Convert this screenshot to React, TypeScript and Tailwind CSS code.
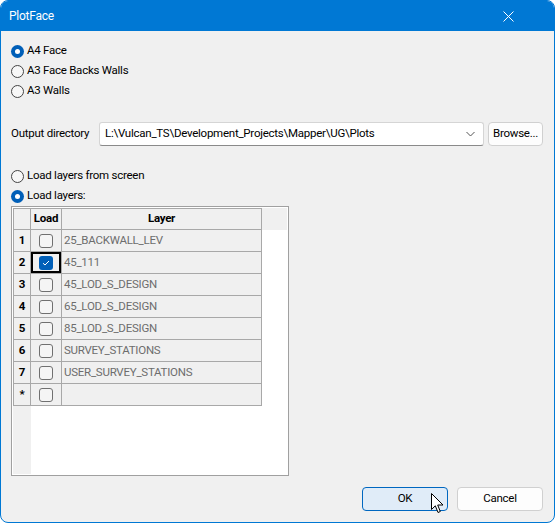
import React from 'react';

const layers = [
  { n: '1', name: '25_BACKWALL_LEV', checked: false },
  { n: '2', name: '45_111', checked: true },
  { n: '3', name: '45_LOD_S_DESIGN', checked: false },
  { n: '4', name: '65_LOD_S_DESIGN', checked: false },
  { n: '5', name: '85_LOD_S_DESIGN', checked: false },
  { n: '6', name: 'SURVEY_STATIONS', checked: false },
  { n: '7', name: 'USER_SURVEY_STATIONS', checked: false },
  { n: '*', name: '', checked: false },
];

function Radio({ checked, label }: { checked?: boolean; label: string }) {
  return (
    <div className="flex items-center h-[20px]">
      {checked ? (
        <span className="w-[13px] h-[13px] rounded-full bg-[#005fb8] flex items-center justify-center">
          <span className="w-[5px] h-[5px] rounded-full bg-white" />
        </span>
      ) : (
        <span className="w-[13px] h-[13px] rounded-full border border-[#444] bg-[#f7f7f7]" />
      )}
      <span className="ml-[3px] whitespace-nowrap">{label}</span>
    </div>
  );
}

function Checkbox({ checked }: { checked?: boolean }) {
  if (checked) {
    return (
      <span className="w-[14px] h-[14px] rounded-[3px] bg-[#005fb8] flex items-center justify-center">
        <svg width="8" height="6" viewBox="0 0 8 6" fill="none">
          <path d="M1 3.2 L3 5 L7 1" stroke="white" strokeWidth="1" />
        </svg>
      </span>
    );
  }
  return <span className="w-[14px] h-[14px] rounded-[3px] border border-[#707070] bg-[#f5f5f5]" />;
}

function LayerGrid() {
  return (
    <div className="flex flex-col w-[278px] h-[270px] border border-[#a0a0a0] bg-white p-px">
      <div className="flex h-[22px] bg-[#f0f0f0]">
        <div className="w-[18px] border border-[#a8a8a8]" />
        <div className="w-[31px] border-y border-r border-[#a8a8a8] flex items-center justify-center font-bold text-black">
          Load
        </div>
        <div className="w-[200px] border-y border-r border-[#a8a8a8] flex items-center justify-center font-bold text-black">
          Layer
        </div>
      </div>
      {layers.map((l) => (
        <div key={l.n} className="flex h-[22px]">
          <div className="w-[18px] bg-[#f0f0f0] border-x border-b border-[#a8a8a8] flex items-center justify-center font-bold text-black">
            {l.n}
          </div>
          <div
            className={
              l.checked
                ? 'w-[31px] bg-[#f0f0f0] border-r border-b border-[#a8a8a8] flex items-center justify-center shadow-[inset_0_0_0_2px_#000]'
                : 'w-[31px] bg-[#f0f0f0] border-r border-b border-[#a8a8a8] flex items-center justify-center'
            }
          >
            <Checkbox checked={l.checked} />
          </div>
          <div className="w-[200px] bg-[#f0f0f0] border-r border-b border-[#a8a8a8] flex items-center pl-[2px] text-[#6d6d6d]">
            {l.name}
          </div>
        </div>
      ))}
      <div className="flex-1 flex">
        <div className="w-[18px] bg-[#f0f0f0]" />
      </div>
    </div>
  );
}

export default function App() {
  return (
    <div
      className="relative w-[555px] h-[523px] flex flex-col bg-[#f0f0f0] border border-[#0078d4] rounded-[8px] overflow-hidden text-[11.5px] tracking-[-0.25px] text-black"
      style={{ fontFamily: 'Roboto, "Noto Sans", sans-serif' }}
    >
      {/* Title bar */}
      <div className="h-[30px] bg-[#0078d4] flex items-center justify-between pl-[8px] pr-[40px] text-white shrink-0">
        <span className="text-[12px]">PlotFace</span>
        <svg width="11" height="11" viewBox="0 0 11 11" stroke="white" strokeWidth="1">
          <path d="M0.5 0.5 L10.5 10.5 M10.5 0.5 L0.5 10.5" />
        </svg>
      </div>

      <div className="flex-1 flex flex-col pl-[10px] pr-[11px] pt-[10px]">
        <div className="flex flex-col">
          <Radio checked label="A4 Face" />
          <Radio label="A3 Face Backs Walls" />
          <Radio label="A3 Walls" />
        </div>

        <div className="flex items-center mt-[21px] h-[24px]">
          <span className="w-[88px] whitespace-nowrap">Output directory</span>
          <div className="w-[385px] h-[24px] bg-white border border-[#d5d5d5] border-b-[#8a8a8a] rounded-[3px] flex items-center justify-between pl-[5px] pr-[8px]">
            <span className="whitespace-nowrap">L:\Vulcan_TS\Development_Projects\Mapper\UG\Plots</span>
            <svg width="9" height="6" viewBox="0 0 9 6" fill="none" stroke="#555" strokeWidth="1">
              <path d="M0.5 1 L4.5 5 L8.5 1" />
            </svg>
          </div>
          <button className="ml-[4px] w-[55px] h-[24px] bg-[#fdfdfd] border border-[#d0d0d0] rounded-[4px] flex items-center justify-center">
            Browse...
          </button>
        </div>

        <div className="flex flex-col mt-[20px]">
          <Radio label="Load layers from screen" />
          <Radio checked label="Load layers:" />
        </div>

        <div>
          <LayerGrid />
        </div>

        <div className="flex justify-end gap-[9px] mt-[11px]">
          <button className="w-[86px] h-[24px] bg-[#e0ecf8] border border-[#0067c0] rounded-[4px] flex items-center justify-center">
            OK
          </button>
          <button className="w-[86px] h-[24px] bg-[#fdfdfd] border border-[#d0d0d0] rounded-[4px] flex items-center justify-center">
            Cancel
          </button>
        </div>
      </div>

      {/* mouse cursor */}
      <svg className="absolute left-[430px] top-[492px]" width="13" height="21" viewBox="0 0 13 21">
        <path
          d="M0.5 0.5 L0.5 16.5 L4.3 12.8 L7 19.5 L9.3 18.5 L6.7 12 L12 12 Z"
          fill="white"
          stroke="black"
          strokeWidth="1"
          strokeLinejoin="round"
        />
      </svg>
    </div>
  );
}
